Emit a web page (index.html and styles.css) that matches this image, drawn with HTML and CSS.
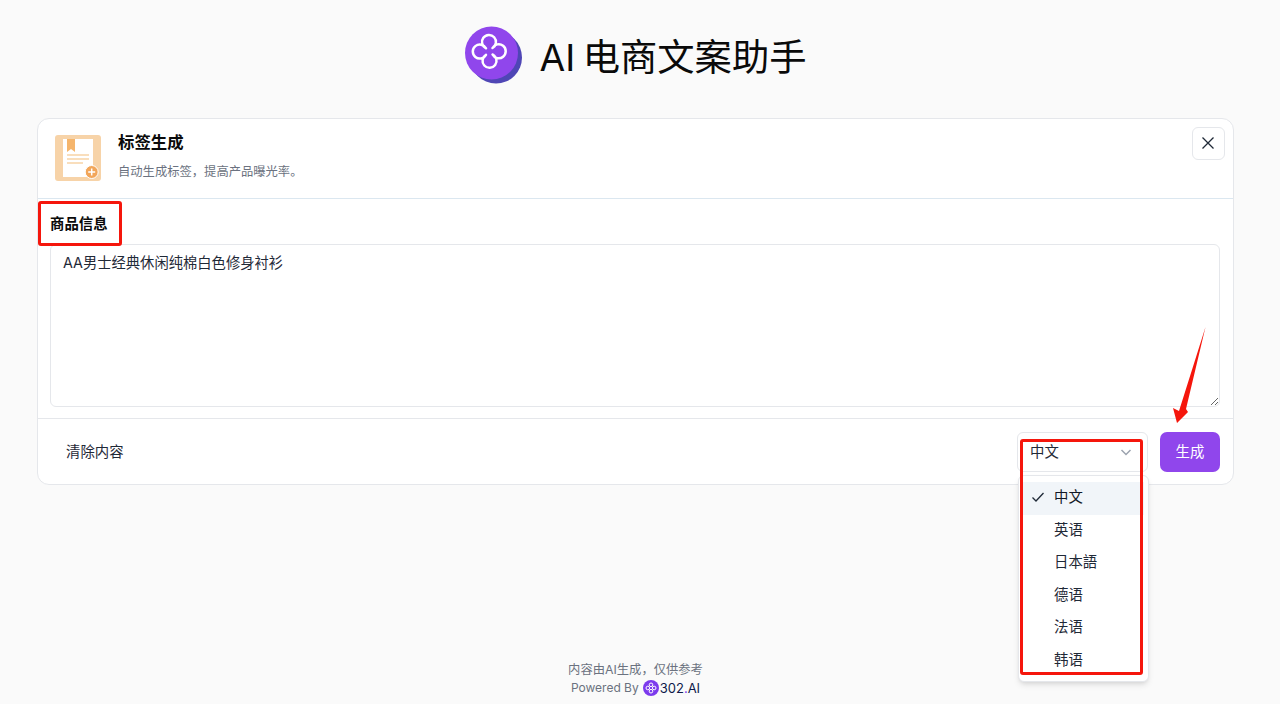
FILE: index.html
```html
<!DOCTYPE html>
<html lang="zh-CN">
<head>
  <meta charset="UTF-8" />
  <title>AI 电商文案助手</title>
  <link rel="stylesheet" href="styles.css">
</head>
<body>
  <div class="page">
    <!-- Title -->
    <header class="top">
      <svg class="logo" width="58" height="58" viewBox="0 0 58 58">
        <circle cx="32" cy="31.500" r="26" fill="#4f46b5" />
        <circle cx="27.500" cy="27" r="26.500" fill="#9046ec" />
        <path d="M22 22.300A7 7 0 1 1 28.500 22A7 7 0 1 1 28.500 28.500A7 7 0 1 1 22 28.800A7 7 0 1 1 22 22.300Z" fill="none" stroke="#fff" stroke-width="2.500" stroke-linejoin="round" />
      </svg>
      <h1 class="title">AI 电商文案助手</h1>
    </header>

    <!-- Main card -->
    <main class="card">
      <div class="card-head">
        <svg class="tool-icon" width="46" height="46" viewBox="0 0 46 46">
          <rect width="46" height="46" rx="3" fill="#f7d3a8" />
          <rect x="8" y="4" width="30" height="38" fill="#fff" />
          <path d="M12 4h8v13l-4-3-4 3z" fill="#f5b56c" />
          <path d="M12 20h22M12 24h22M12 28h16" stroke="#f8d3a6" stroke-width="1.300" />
          <circle cx="36.700" cy="37" r="6.500" fill="#f2a65a" stroke="#fff" stroke-width="1" />
          <path d="M36.700 33.500v7M33.200 37h7" stroke="#fff" stroke-width="1.500" />
        </svg>
        <div class="head-text">
          <h2 class="tool-name">标签生成</h2>
          <p class="tool-desc">自动生成标签，提高产品曝光率。</p>
        </div>
        <button class="close-btn" type="button">
          <svg width="16" height="16" viewBox="0 0 16 16"><path d="M2.500 2.500l11 11M13.500 2.500l-11 11" stroke="#1f2937" stroke-width="1.300" /></svg>
        </button>
      </div>

      <div class="card-body">
        <label class="field-label" for="info">商品信息</label>
        <textarea class="field-input" id="info">AA男士经典休闲纯棉白色修身衬衫</textarea>
      </div>

      <div class="card-foot">
        <button class="clear-btn" type="button">清除内容</button>
        <div class="foot-right">
          <div class="select">
            <span>中文</span>
            <svg class="chevron" width="16" height="16" viewBox="0 0 16 16"><path d="M3.500 6l4.500 4.500L12.500 6" fill="none" stroke="#9ca3af" stroke-width="1.500" /></svg>
            <!-- Open dropdown -->
            <ul class="menu">
              <li class="menu-item active">
                <svg class="check" width="16" height="16" viewBox="0 0 16 16"><path d="M2.500 8.500l3.500 3.500 7.500-8" fill="none" stroke="#1f2937" stroke-width="1.300" /></svg>
                中文
              </li>
              <li class="menu-item">英语</li>
              <li class="menu-item">日本語</li>
              <li class="menu-item">德语</li>
              <li class="menu-item">法语</li>
              <li class="menu-item">韩语</li>
            </ul>
            <div class="mark mark-menu"></div>
          </div>
          <button class="submit-btn" type="button">生成</button>
        </div>
      </div>

      <!-- Red annotations on top of the screenshot -->
      <div class="mark mark-label"></div>
      <svg class="arrow" width="40" height="100" viewBox="0 0 40 100">
        <path d="M35.500 2L16 84 18 87 7 98 3 83 9 86z" fill="#f5160c" />
      </svg>
    </main>

    <footer class="bottom">
      <p>内容由AI生成，仅供参考</p>
      <p class="powered">
        Powered By
        <svg width="16" height="16" viewBox="0 0 16 16">
          <circle cx="8" cy="8" r="8" fill="#7c3aed" />
          <g fill="none" stroke="#fff" stroke-width="1">
            <circle cx="8" cy="4.800" r="1.800" />
            <circle cx="8" cy="11.200" r="1.800" />
            <circle cx="4.800" cy="8" r="1.800" />
            <circle cx="11.200" cy="8" r="1.800" />
          </g>
        </svg>
        <span class="brand">302<i>.</i>AI</span>
      </p>
    </footer>
  </div>
</body>
</html>
```

FILE: styles.css
```css
* {
  box-sizing: border-box;
}

body {
  margin: 0;
  background-color: #fafafa;
  font-family: "Inter", "Noto Sans CJK SC", sans-serif;
  color: #111827;
}

.page {
  width: 1271px;
  height: 704px;
  display: flex;
  flex-direction: column;
  align-items: center;
  overflow: hidden;
}

.top {
  height: 118px;
  padding-bottom: 8px;
  display: flex;
  align-items: center;
  gap: 17px;
}

.title {
  margin: 0;
  font-size: 37.300px;
  word-spacing: -3px;
  font-weight: 400;
  color: #0a0a0a;
}

.card {
  position: relative;
  width: 1197px;
  height: 367px;
  background-color: #fff;
  border: 1px solid #e5e7eb;
  border-radius: 12px;
}

.card-head {
  height: 80px;
  padding: 16px 8px 0 17px;
  display: flex;
  align-items: flex-start;
  border-bottom: 1px solid #dbe7f0;
}

.tool-icon {
  flex: none;
}

.head-text {
  margin-left: 17px;
  flex: 1;
}

.tool-name {
  margin: -1px 0 0;
  font-size: 16.400px;
  line-height: 16px;
  font-weight: 600;
  color: #0a0a0a;
}

.tool-desc {
  margin: 14px 0 0;
  font-size: 12.300px;
  line-height: 16px;
  color: #6b7280;
}

.close-btn {
  width: 33px;
  height: 33px;
  margin-top: -8px;
  padding: 0 2px 2px 0;
  display: flex;
  align-items: center;
  justify-content: center;
  background-color: #fff;
  border: 1px solid #e5e7eb;
  border-radius: 6px;
}

.card-body {
  height: 220px;
  padding: 15px 13px 0 12px;
  border-bottom: 1px solid #e5e7eb;
}

.field-label {
  display: block;
  font-size: 14.400px;
  line-height: 20px;
  font-weight: 600;
  color: #0a0a0a;
}

.field-input {
  display: block;
  width: 100%;
  height: 163px;
  margin-top: 10px;
  padding: 8px 12px;
  font-family: inherit;
  font-size: 14.300px;
  line-height: 20px;
  color: #1f2937;
  background-color: #fff;
  border: 1px solid #e5e7eb;
  border-radius: 6px;
  outline: none;
}

.card-foot {
  padding: 13px 13px 0 12px;
  display: flex;
  justify-content: space-between;
  align-items: center;
}

.clear-btn {
  height: 40px;
  padding: 0 16px 4px;
  font-family: inherit;
  font-size: 14.400px;
  color: #1f2937;
  background: none;
  border: none;
}

.foot-right {
  display: flex;
  align-items: center;
  gap: 12px;
}

.select {
  position: relative;
  width: 131px;
  height: 40px;
  padding: 0 13px 4px 12px;
  display: flex;
  justify-content: space-between;
  align-items: center;
  font-size: 14.400px;
  color: #1f2937;
  background-color: #fff;
  border: 1px solid #e5e7eb;
  border-radius: 6px;
}

.chevron {
  margin-top: 4px;
}

.submit-btn {
  width: 60px;
  height: 40px;
  padding: 0 0 4px;
  font-family: inherit;
  font-size: 14.400px;
  color: #fff;
  background-color: #9046ec;
  border: none;
  border-radius: 7px;
}

.menu {
  position: absolute;
  top: 42px;
  left: 0;
  width: 131px;
  height: 207px;
  margin: 0;
  padding: 6px 4px 4px;
  list-style: none;
  background-color: #fff;
  border: 1px solid #e5e7eb;
  border-radius: 6px;
  box-shadow: 0 4px 6px -1px rgba(0, 0, 0, 0.1), 0 2px 4px -2px rgba(0, 0, 0, 0.1);
}

.menu-item {
  position: relative;
  height: 32.500px;
  padding-left: 31px;
  line-height: 29.500px;
  font-size: 14.400px;
  color: #1f2937;
}

.menu-item.active {
  background-color: #f1f5f9;
  color: #111827;
}

.check {
  position: absolute;
  left: 7px;
  top: 7px;
}

.mark {
  position: absolute;
  border: 3px solid #f5160c;
  border-radius: 3px;
  pointer-events: none;
}

.mark-label {
  left: 0;
  top: 82px;
  width: 84px;
  height: 45px;
}

.mark-menu {
  left: 2px;
  top: 6px;
  width: 123px;
  height: 236px;
}

.arrow {
  position: absolute;
  left: 1132px;
  top: 206px;
}

.bottom {
  margin-top: auto;
  padding-bottom: 7px;
  text-align: center;
  font-size: 12.300px;
  line-height: 18px;
  color: #6b7280;
}

.bottom p {
  margin: 0;
}

.powered {
  display: flex;
  align-items: center;
  justify-content: center;
  gap: 4px;
  font-size: 12px;
}

.brand {
  margin-left: -3px;
  font-size: 13px;
  font-weight: 400;
  color: #0f1a4a;
}

.brand i {
  color: #7c3aed;
  font-style: normal;
}
```
